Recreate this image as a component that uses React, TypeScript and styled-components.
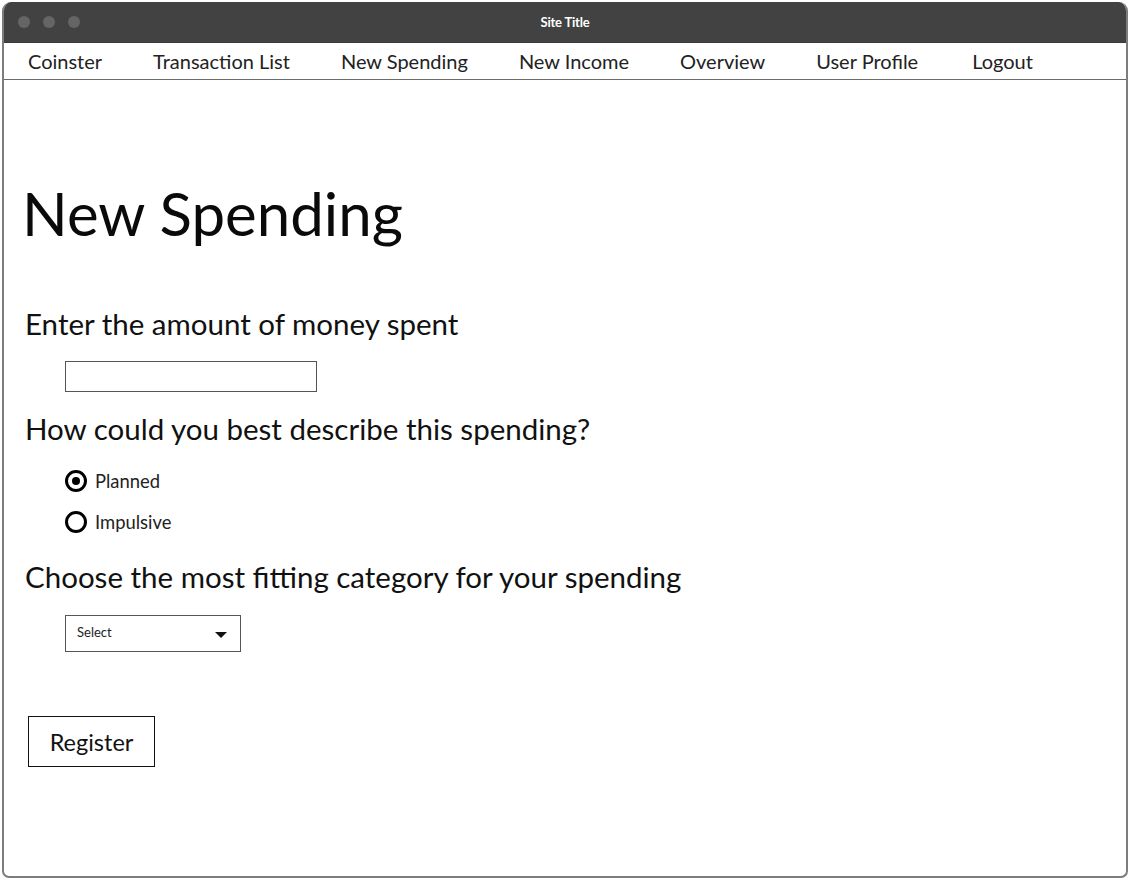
import React, { FC } from "react";
import styled, { createGlobalStyle } from "styled-components";

const FONT = `Lato, "Open Sans", sans-serif`;

const Global = createGlobalStyle`
  html, body {
    margin: 0;
    padding: 0;
    background: #fff;
  }
  body {
    font-family: ${FONT};
    color: #111;
  }
`;

const Window = styled.div`
  box-sizing: border-box;
  margin: 2px;
  width: 1126px;
  height: 876px;
  border: 2px solid #7d7d7d;
  border-top: none;
  border-radius: 9px 9px 7px 7px;
  overflow: hidden;
  display: flex;
  flex-direction: column;
`;

const TitleBar = styled.div`
  height: 40px;
  background: #424242;
  position: relative;
  display: flex;
  align-items: center;
  justify-content: center;
  margin: 0 -2px;
`;

const Dots = styled.div`
  position: absolute;
  left: 16px;
  top: 14px;
  display: flex;
  gap: 13px;
`;

const Dot = styled.span`
  width: 12px;
  height: 12px;
  border-radius: 50%;
  background: #656565;
`;

const SiteTitle = styled.span`
  color: #fff;
  font-size: 13px;
  font-weight: bold;
  letter-spacing: -0.2px;
`;

const Nav = styled.nav`
  box-sizing: border-box;
  height: 38px;
  border-top: 1px solid #3a3a3a;
  border-bottom: 1px solid #6a6a6a;
  display: flex;
  align-items: center;
  padding-left: 24px;
  gap: 51px;
`;

const NavItem = styled.span<{ $extra?: number }>`
  font-size: 20px;
  color: #222;
  margin-left: ${(p) => p.$extra ?? 0}px;
`;

const Main = styled.main`
  padding-left: 18px;
  display: flex;
  flex-direction: column;
  align-items: flex-start;
`;

const PageTitle = styled.h1`
  margin: 101px 0 0;
  font-size: 60px;
  line-height: 64px;
  font-weight: normal;
  color: #0a0a0a;
`;

const Question = styled.h2<{ $top: number }>`
  margin: ${(p) => p.$top}px 0 0 3px;
  font-size: 29.5px;
  line-height: 34px;
  font-weight: normal;
  color: #111;
`;

const Indented = styled.div<{ $top: number }>`
  margin: ${(p) => p.$top}px 0 0 43px;
  display: flex;
  flex-direction: column;
  gap: 17px;
`;

const TextInput = styled.input`
  box-sizing: border-box;
  width: 252px;
  height: 31px;
  border: 1px solid #555;
  margin: 0;
  padding: 0 6px;
  font-family: ${FONT};
  outline: none;
`;

const RadioRow = styled.label`
  display: flex;
  align-items: center;
  gap: 8px;
  height: 24px;
  font-size: 18.4px;
  color: #222;
`;

const RadioMark = styled.span<{ $checked?: boolean }>`
  box-sizing: border-box;
  width: 22px;
  height: 22px;
  border: 3px solid #000;
  border-radius: 50%;
  display: flex;
  align-items: center;
  justify-content: center;
  &::after {
    content: "";
    width: 8px;
    height: 8px;
    border-radius: 50%;
    background: ${(p) => (p.$checked ? "#000" : "transparent")};
  }
`;

const SelectBox = styled.div`
  box-sizing: border-box;
  width: 176px;
  height: 37px;
  border: 1px solid #555;
  display: flex;
  align-items: center;
  justify-content: space-between;
  padding: 0 13px 3px 11px;
  font-size: 13px;
  color: #222;
`;

const Caret = styled.span`
  width: 0;
  height: 0;
  border-left: 6px solid transparent;
  border-right: 6px solid transparent;
  border-top: 6px solid #111;
  margin-top: 6px;
`;

const Button = styled.button`
  box-sizing: border-box;
  margin: 64px 0 0 6px;
  width: 127px;
  height: 51px;
  border: 1px solid #111;
  background: #fff;
  font-family: ${FONT};
  font-size: 23.5px;
  color: #111;
  padding: 0;
`;

const navItems = [
  "Coinster",
  "Transaction List",
  "New Spending",
  "New Income",
  "Overview",
  "User Profile",
  "Logout",
];

const Radio: FC<{ label: string; checked?: boolean }> = ({ label, checked }) => (
  <RadioRow>
    <RadioMark $checked={checked} />
    {label}
  </RadioRow>
);

const App: FC = () => (
  <>
    <Global />
    <Window>
      <TitleBar>
        <Dots>
          <Dot />
          <Dot />
          <Dot />
        </Dots>
        <SiteTitle>Site Title</SiteTitle>
      </TitleBar>
      <Nav>
        {navItems.map((item) => (
          <NavItem key={item} $extra={item === "Logout" ? 3 : 0}>
            {item}
          </NavItem>
        ))}
      </Nav>
      <Main>
        <PageTitle>New Spending</PageTitle>
        <Question $top={62}>Enter the amount of money spent</Question>
        <Indented $top={20}>
          <TextInput />
        </Indented>
        <Question $top={20}>How could you best describe this spending?</Question>
        <Indented $top={23}>
          <Radio label="Planned" checked />
          <Radio label="Impulsive" />
        </Indented>
        <Question $top={26}>Choose the most fitting category for your spending</Question>
        <Indented $top={21}>
          <SelectBox>
            Select
            <Caret />
          </SelectBox>
        </Indented>
        <Button>Register</Button>
      </Main>
    </Window>
  </>
);

export default App;
